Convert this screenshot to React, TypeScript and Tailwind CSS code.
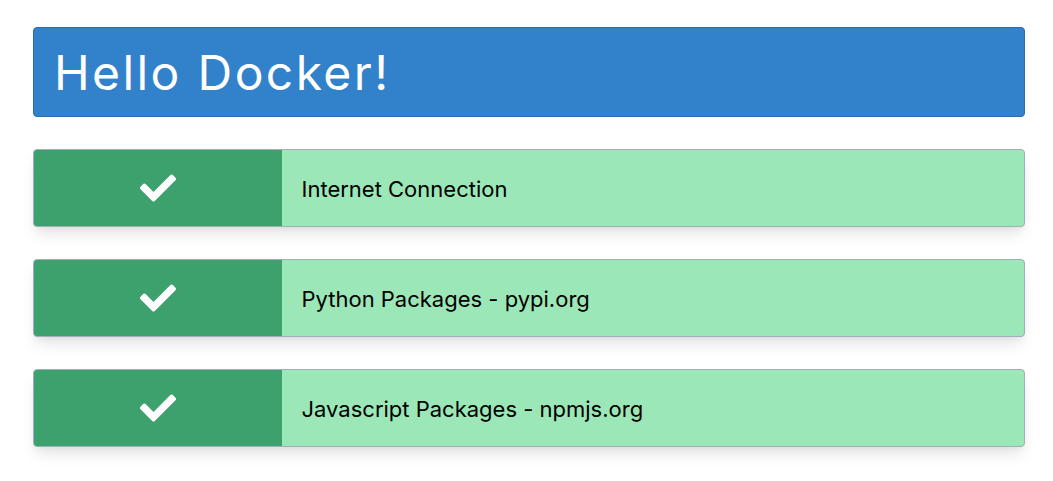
import { FaCheck } from "react-icons/fa";

const checks = ["Internet Connection", "Python Packages - pypi.org", "Javascript Packages - npmjs.org"];

export default function App() {
  return (
    <main className="min-h-screen bg-white pt-[27px] pr-7 pb-8 pl-[33px] font-['Inter',sans-serif] text-black">
      <h1 className="mb-8 rounded border border-[#2b6cb0] bg-[#3182ca] px-5 pt-[9px] pb-[7px] text-5xl leading-[72px] tracking-wider text-white">
        Hello Docker!
      </h1>
      <ul className="flex flex-col gap-8">
        {checks.map((label) => (
          <li
            key={label}
            className="flex overflow-hidden rounded border border-[#a0aec0] bg-[#9be7b8] shadow-[0_10px_15px_-3px_rgba(0,0,0,0.1),0_4px_6px_-2px_rgba(0,0,0,0.05)]"
          >
            <div className="flex w-1/4 items-center justify-center bg-[#3ca16d] text-white">
              <FaCheck className="size-9" aria-hidden="true" />
            </div>
            <p className="flex-1 px-5 pt-[21px] pb-[19px] text-[22px] leading-9">{label}</p>
          </li>
        ))}
      </ul>
    </main>
  );
}
